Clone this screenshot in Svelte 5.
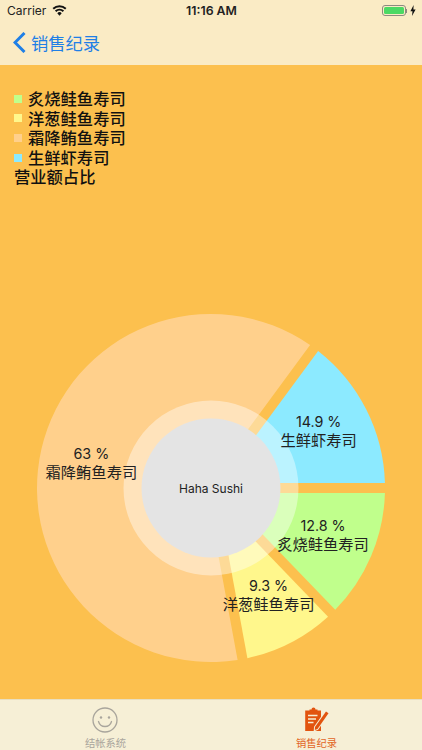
<script>
	const cx = 211
	const cy = 298
	const outer = 174
	const hole = 69.5
	const ring = 87.5
	const gap = 10

	const slices = [
		{ name: "炙烧鲑鱼寿司", pct: 12.8, color: "#c0ff8c", dx: 0, dy: -2 },
		{ name: "洋葱鲑鱼寿司", pct: 9.3, color: "#fff78c", dx: 2, dy: -2 },
		{ name: "霜降鲔鱼寿司", pct: 63, color: "#ffd08c", dx: -1, dy: 1 },
		{ name: "生鲜虾寿司", pct: 14.9, color: "#8ceaff", dx: -1, dy: -3 }
	]

	function point(r, a) {
		return [cx + r * Math.cos(a), cy + r * Math.sin(a)]
	}

	// edges stay parallel to the radial line so the gap has the same width all along
	function sector(start, end) {
		const half = (end - start) / 2
		const off = Math.asin(gap / 2 / outer)
		const [x1, y1] = point(outer, start + off)
		const [x2, y2] = point(outer, end - off)
		const large = end - start - 2 * off > Math.PI ? 1 : 0
		const [ax, ay] = point(gap / 2 / Math.abs(Math.sin(half)), start + half)
		return `M${ax} ${ay}L${x1} ${y1}A${outer} ${outer} 0 ${large} 1 ${x2} ${y2}Z`
	}

	let angle = 0
	const total = slices.reduce((sum, s) => sum + s.pct, 0)
	const sectors = slices.map((s) => {
		const start = angle
		const end = start + (s.pct / total) * Math.PI * 2
		angle = end
		const [lx, ly] = point((hole + outer) / 2, (start + end) / 2)
		return { ...s, d: sector(start, end), lx: lx + s.dx, ly: ly + s.dy }
	})
</script>

<div class="screen">
	<header class="top">
		<div class="status">
			<div class="status-left">
				<span>Carrier</span>
				<svg class="wifi" viewBox="0 0 16 12">
					<path d="M8 11.600 5.600 8.900a3.500 3.500 0 0 1 4.800 0Z" />
					<path d="M4.500 7.700 3 6a7.400 7.400 0 0 1 10 0l-1.500 1.700a5.200 5.200 0 0 0-7 0Z" />
					<path d="M1.900 4.800.4 3.200a11.300 11.300 0 0 1 15.200 0l-1.500 1.600a9.100 9.100 0 0 0-12.200 0Z" />
				</svg>
			</div>
			<span class="time">11:16 AM</span>
			<div class="status-right">
				<span class="battery"><span class="level"></span></span>
				<span class="nub"></span>
				<svg class="bolt" viewBox="0 0 6 11">
					<path d="M3.600 0 .4 6.200h2.100L2 11l3.600-6.500H3.400Z" />
				</svg>
			</div>
		</div>
		<nav class="nav">
			<svg class="back" viewBox="0 0 13 21">
				<path d="M11.500 1 2 10.500l9.500 9.500" />
			</svg>
			<span>销售纪录</span>
		</nav>
	</header>

	<main class="content">
		<ul class="legend">
			{#each slices as s}
				<li><i style="background: {s.color}"></i>{s.name}</li>
			{/each}
			<li>营业额占比</li>
		</ul>
		<svg class="chart" viewBox="0 0 422 509">
			{#each sectors as s}
				<path d={s.d} fill={s.color} />
			{/each}
			<circle {cx} {cy} r={ring} fill="#fff" fill-opacity="0.41" />
			<circle {cx} {cy} r={hole} fill="#e4e4e4" />
			<text class="center" x={cx} y={cy + 5} text-anchor="middle">Haha Sushi</text>
			{#each sectors as s}
				<text class="value" x={s.lx} y={s.ly - 3} text-anchor="middle">{s.pct} %</text>
				<text class="name" x={s.lx} y={s.ly + 16} text-anchor="middle">{s.name}</text>
			{/each}
		</svg>
	</main>

	<footer class="tabs">
		<div class="tab">
			<svg class="tab-icon smile" viewBox="0 0 26 26">
				<circle cx="13" cy="13" r="12" fill="none" stroke="#a9a59c" stroke-width="1.300" />
				<circle cx="9" cy="10.500" r="1.200" fill="#a9a59c" />
				<circle cx="17" cy="10.500" r="1.200" fill="#a9a59c" />
				<path d="M6.500 14.500c1 3.500 3.500 5 6.500 5s5.500-1.500 6.500-5" fill="none" stroke="#a9a59c" stroke-width="1.300" stroke-linecap="round" />
			</svg>
			<span>结帐系统</span>
		</div>
		<div class="tab active">
			<svg class="tab-icon" viewBox="0 0 26 26">
				<path fill="#e2540f" d="M1.200 3.500h4.300v-1h2a2 2 0 0 1 4 0h2v1h3.500V24H1.200Z" />
				<path stroke="#f6efd6" stroke-width="1.400" d="M4 8.500h9.500M4 12h8M4 15.500h5.500" />
				<path fill="#e2540f" stroke="#f6efd6" stroke-width="2" paint-order="stroke" d="M22 4.500 24.500 6.300 13.500 22l-2.700 1 .2-3Z" />
			</svg>
			<span>销售纪录</span>
		</div>
	</footer>
</div>

<style>
	:global(body) {
		margin: 0;
	}
	.screen {
		width: 422px;
		height: 750px;
		display: flex;
		flex-direction: column;
		background: #fcc04e;
		font-family: "Noto Sans CJK SC", sans-serif;
		overflow: hidden;
	}
	.top {
		background: #faebc5;
		height: 65px;
		flex: none;
	}
	.status {
		height: 21px;
		padding: 0 6px 0 7px;
		display: grid;
		grid-template-columns: 1fr auto 1fr;
		align-items: center;
		font: 12px Inter, sans-serif;
		color: #222;
	}
	.status-left {
		display: flex;
		align-items: center;
		gap: 6px;
	}
	.wifi {
		width: 15px;
		height: 11px;
		fill: #111;
	}
	.time {
		font-weight: 600;
		font-size: 12.300px;
	}
	.status-right {
		display: flex;
		align-items: center;
		justify-content: flex-end;
	}
	.battery {
		width: 24px;
		height: 11px;
		box-sizing: border-box;
		border: 1px solid #8d8a80;
		border-radius: 3px;
		padding: 1px;
		display: flex;
	}
	.level {
		flex: 1;
		background: #4cd964;
		border-radius: 1.500px;
	}
	.nub {
		width: 1.500px;
		height: 4px;
		background: #8d8a80;
		margin-right: 3px;
	}
	.bolt {
		width: 6px;
		height: 11px;
		fill: #111;
	}
	.nav {
		height: 42px;
		display: flex;
		align-items: center;
		gap: 5px;
		padding-left: 13px;
		color: #1f7fe6;
		font-size: 17.300px;
	}
	.back {
		width: 13px;
		height: 21px;
		fill: none;
		stroke: #1f7fe6;
		stroke-width: 3;
	}
	.content {
		flex: 1;
		min-height: 0;
		display: flex;
		flex-direction: column;
	}
	.legend {
		list-style: none;
		margin: 0;
		padding: 24px 0 0 14px;
		height: 101px;
		box-sizing: content-box;
		font-size: 16.300px;
		font-weight: 500;
		line-height: 19.600px;
		color: #111;
		flex: none;
	}
	.legend li {
		display: flex;
		align-items: center;
	}
	.legend i {
		width: 8px;
		height: 8px;
		margin-right: 6px;
	}
	.chart {
		width: 422px;
		flex: 1;
		min-height: 0;
		display: block;
	}
	.chart text {
		fill: #222;
	}
	.center {
		font: 12px Inter, sans-serif;
	}
	.value {
		font: 14.300px Inter, sans-serif;
	}
	.name {
		font-size: 15.300px;
	}
	.tabs {
		height: 51px;
		flex: none;
		background: #f6efd6;
		border-top: 1px solid #e8dfc0;
		box-sizing: border-box;
		display: grid;
		grid-template-columns: 1fr 1fr;
	}
	.tab {
		display: flex;
		flex-direction: column;
		align-items: center;
		padding-top: 7px;
		font-size: 10.300px;
		line-height: 12px;
		color: #a9a59c;
		gap: 4px;
	}
	.tab.active {
		color: #e2651f;
	}
	.tab-icon {
		width: 26px;
		height: 26px;
	}
	.smile {
		margin-right: 2px;
	}
</style>
